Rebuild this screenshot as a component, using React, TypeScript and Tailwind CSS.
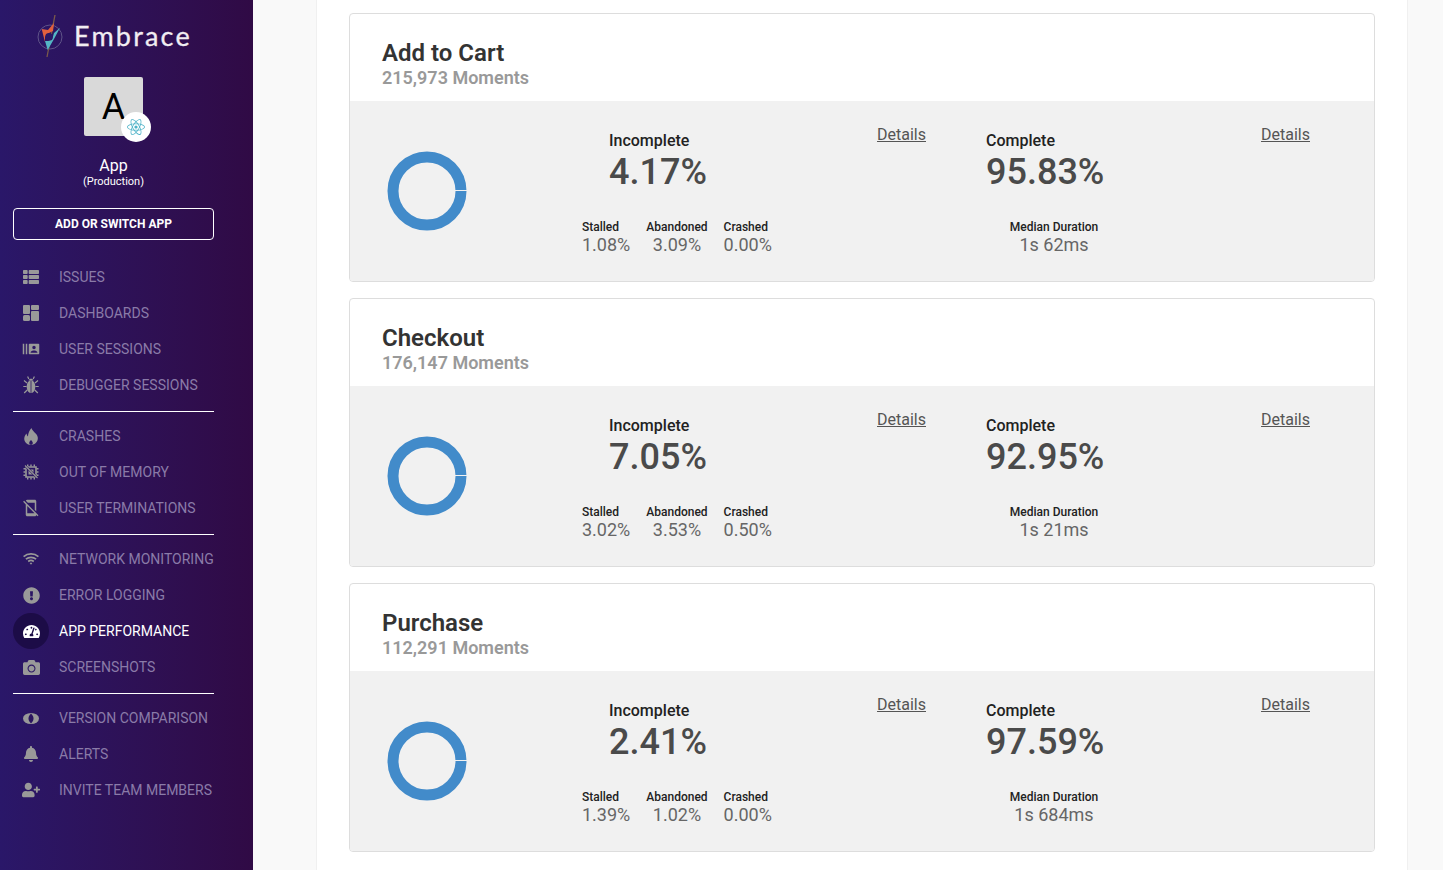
import React from 'react';
import { FaThList, FaExclamationCircle, FaTachometerAlt, FaCamera, FaBell, FaUserPlus, FaReact } from 'react-icons/fa';
import { MdRecentActors, MdMobileOff } from 'react-icons/md';

const DashboardIcon = () => (
  <svg viewBox="0 0 16 16" className="w-4 h-4" fill="currentColor">
    <rect x="0" y="0" width="7" height="9" rx="1" />
    <rect x="0" y="10" width="7" height="6" rx="1.5" />
    <rect x="8" y="0" width="8" height="5" rx="1" />
    <rect x="8" y="6" width="8" height="10" rx="1" />
  </svg>
);

const BugIcon = () => (
  <svg viewBox="0 0 16 18" className="w-4 h-[18px]" fill="currentColor">
    <path d="M8 4.5c-2.600 0-4.300 2.600-4.300 6.200 0 3.600 1.800 6.300 4.300 6.300s4.300-2.700 4.300-6.300c0-3.600-1.700-6.200-4.300-6.200z" />
    <path d="M5.600 4.600C5.900 3.400 6.800 2.800 8 2.800s2.100.6 2.400 1.800z" />
    <path d="M8 5v12" stroke="#2b1560" strokeWidth="0.8" />
    <path d="M5.800 3 4.600.5M10.200 3l1.200-2.500M4 7 1 4.500M12 7l3-2.500M3.600 10.500H.3M12.400 10.500h3.300M4.200 14 1.200 17M11.800 14l3 3" stroke="currentColor" strokeWidth="1.2" fill="none" />
  </svg>
);

const FlameIcon = () => (
  <svg viewBox="0 0 14 17" className="w-[14px] h-[17px]" fill="currentColor">
    <path
      fillRule="evenodd"
      d="M7.500 0c.3 3 5.300 5 6.200 9 .8 3.800-2 8-6.700 8S-.4 13 .4 9.500C.8 7.800 1.600 6.500 2.600 5.500c.1 1.300.5 2.300 1.300 2.900C4.200 5 5.500 2 7.500 0zM7 12c-1 1-1.800 1.900-1.800 3 0 1 .8 1.800 1.800 1.800s1.800-.8 1.800-1.800c0-1.100-.8-2-1.800-3z"
    />
  </svg>
);

const MemoryOff = () => (
  <svg viewBox="0 0 16 16" className="w-4 h-4" fill="currentColor">
    <path d="M3 3h10v10H3z" fill="none" stroke="currentColor" strokeWidth="1.6" />
    <path d="M5.500 5.500h5v5h-5z" />
    <path d="M4 0.500h1.400v2H4zM7.300 0.500h1.400v2H7.300zM10.600 0.500H12v2h-1.400zM4 13.500h1.400v2H4zM7.300 13.500h1.400v2H7.300zM10.600 13.500H12v2h-1.400zM0.500 4h2v1.400h-2zM0.500 7.300h2v1.400h-2zM0.500 10.600h2V12h-2zM13.500 4h2v1.400h-2zM13.500 7.300h2v1.400h-2zM13.500 10.600h2V12h-2z" />
    <path d="M2 1.500 14.500 14" stroke="#2b1560" strokeWidth="2.2" />
    <path d="M2 1.500 14.500 14" stroke="currentColor" strokeWidth="1.1" />
  </svg>
);

const WifiIcon = () => (
  <svg viewBox="0 0 16 12" className="w-4 h-3" fill="none" stroke="currentColor" strokeWidth="1.7">
    <path d="M0.600 3.600C4.800 0 11.200 0 15.400 3.600" />
    <path d="M2.900 6.100C5.800 3.700 10.200 3.700 13.100 6.100" />
    <path d="M5.200 8.500C6.800 7.200 9.200 7.200 10.800 8.500" />
    <path d="M6.700 10 8 11.800 9.300 10C8.500 9.500 7.500 9.500 6.700 10z" fill="currentColor" stroke="none" />
  </svg>
);

const VersionEye = () => (
  <svg viewBox="0 0 16 11" className="w-4 h-[11px]">
    <ellipse cx="8" cy="5.500" rx="8" ry="5.500" fill="currentColor" />
    <path d="M8 .5C6 2.500 5.500 4 5.500 5.500S6 8.500 8 10.500c2-2 2.500-3.500 2.500-5S10 2.500 8 .5z" fill="#2b1560" />
  </svg>
);

const Logo = () => (
  <svg viewBox="0 0 30 44" className="w-[30px] h-[44px]">
    <circle cx="15" cy="22" r="12" fill="none" stroke="#5f5488" strokeWidth="1" />
    <path d="M20 0 12 42" stroke="#7a5a4a" strokeWidth="1.3" />
    <path d="M6.700 14 13 15 19 8 18 16 14 18 10 22 10 27z" fill="#e2603f" />
    <path d="M25 12.700 19 24 12.700 35 10 26 13 26 17 25 19 18z" fill="#54b5c4" />
    <circle cx="14" cy="21.700" r="3.800" fill="#2a1766" />
  </svg>
);

const navGroups = [
  [
    { label: 'Issues', icon: <FaThList size={16} /> },
    { label: 'Dashboards', icon: <DashboardIcon /> },
    { label: 'User Sessions', icon: <span className="-scale-x-100"><MdRecentActors size={18} /></span> },
    { label: 'Debugger Sessions', icon: <BugIcon /> },
  ],
  [
    { label: 'Crashes', icon: <FlameIcon /> },
    { label: 'Out of Memory', icon: <MemoryOff /> },
    { label: 'User Terminations', icon: <MdMobileOff size={18} /> },
  ],
  [
    { label: 'Network Monitoring', icon: <WifiIcon /> },
    { label: 'Error Logging', icon: <FaExclamationCircle size={17} /> },
    { label: 'App Performance', icon: <FaTachometerAlt size={17} />, active: true },
    { label: 'Screenshots', icon: <FaCamera size={17} /> },
  ],
  [
    { label: 'Version Comparison', icon: <VersionEye /> },
    { label: 'Alerts', icon: <FaBell size={16} /> },
    { label: 'Invite Team Members', icon: <FaUserPlus size={18} /> },
  ],
];

const moments = [
  { name: 'Add to Cart', count: '215,973', incomplete: '4.17%', complete: '95.83%', stalled: '1.08%', abandoned: '3.09%', crashed: '0.00%', median: '1s 62ms' },
  { name: 'Checkout', count: '176,147', incomplete: '7.05%', complete: '92.95%', stalled: '3.02%', abandoned: '3.53%', crashed: '0.50%', median: '1s 21ms' },
  { name: 'Purchase', count: '112,291', incomplete: '2.41%', complete: '97.59%', stalled: '1.39%', abandoned: '1.02%', crashed: '0.00%', median: '1s 684ms' },
];

const Donut = () => (
  <svg viewBox="0 0 80 80" className="w-20 h-20">
    <circle cx="40" cy="40" r="34" fill="none" stroke="#428bca" strokeWidth="11" />
    <path d="M68 39.500h12" stroke="#f1f1f1" strokeWidth="1" />
  </svg>
);

const Sidebar = () => (
  <aside className="w-[253px] shrink-0 h-full bg-gradient-to-r from-[#2a1769] to-[#300a45] text-white pl-[13px] pr-[39px]">
    <div className="flex items-center h-[74px] pl-[22px] gap-[9px]">
      <Logo />
      <span className="font-['Lato'] text-[27px] leading-none tracking-[2.2px] text-[#f1edf2] pb-[3px] [-webkit-text-stroke:0.3px_#f1edf2]">Embrace</span>
    </div>
    <div className="flex flex-col items-center">
      <div className="relative mt-[3px] w-[59px] h-[59px] rounded-[2px] bg-[#d9d9d9] flex items-center justify-center">
        <span className="text-[36px] leading-none text-black">A</span>
        <div className="absolute -right-2 -bottom-[6px] w-[30px] h-[30px] rounded-full bg-white flex items-center justify-center text-[#4fb3c8]">
          <FaReact size={18} />
        </div>
      </div>
      <div className="mt-[20px] text-base leading-[19px]">App</div>
      <div className="text-[11px] leading-[13px]">(Production)</div>
    </div>
    <button className="mt-5 w-[201px] h-8 border border-white rounded text-xs font-bold uppercase">Add or Switch App</button>
    <nav className="mt-[19px]">
      {navGroups.map((group, i) => (
        <div key={i} className={i < navGroups.length - 1 ? 'border-b border-white pb-2 mb-[6px]' : ''}>
          {group.map(item => (
            <div key={item.label} className="flex items-center h-9 uppercase text-sm whitespace-nowrap">
              <div className={`w-9 h-9 shrink-0 rounded-full flex items-center justify-center ${item.active ? 'bg-[#1c0c47] text-white' : 'text-[#999999]'}`}>
                {item.icon}
              </div>
              <span className={`ml-[10px] ${item.active ? 'text-white' : 'text-[#8a7ba8]'}`}>{item.label}</span>
            </div>
          ))}
        </div>
      ))}
    </nav>
  </aside>
);

const Metric = ({ label, value, align }: { label: string; value: string; align: string }) => (
  <div className={align}>
    <div className="text-xs font-medium leading-[14px] text-[#222222]">{label}</div>
    <div className="text-lg leading-[21px] text-[#666666]">{value}</div>
  </div>
);

const MomentCard = ({ m }: { m: (typeof moments)[number] }) => (
  <div className="h-[269px] rounded border border-[#dddddd] overflow-hidden bg-white">
    <div className="h-[87px] pl-8 pt-[24px]">
      <h2 className="text-2xl font-semibold leading-[30px] text-[#333333]">{m.name}</h2>
      <p className="text-lg font-semibold leading-[20px] text-[#999999]">{m.count} Moments</p>
    </div>
    <div className="h-[180px] bg-[#f1f1f1] flex">
      <div className="w-[232px] shrink-0 pl-[37px] flex items-center">
        <Donut />
      </div>
      <div className="w-[404px] shrink-0 pr-[60px] pt-6">
        <div className="flex justify-between">
          <div className="pl-[27px] pt-[6px]">
            <div className="text-base font-medium leading-[19px] text-[#222222]">Incomplete</div>
            <div className="text-4xl font-medium leading-[44px] text-[#4a4a4a]">{m.incomplete}</div>
          </div>
          <a className="text-base leading-[19px] underline text-[#555555]">Details</a>
        </div>
        <div className="flex gap-4 mt-[26px]">
          <Metric label="Stalled" value={m.stalled} align="text-left" />
          <Metric label="Abandoned" value={m.abandoned} align="text-center" />
          <Metric label="Crashed" value={m.crashed} align="text-left" />
        </div>
      </div>
      <div className="w-[324px] shrink-0 pt-6">
        <div className="flex justify-between">
          <div className="pt-[6px]">
            <div className="text-base font-medium leading-[19px] text-[#222222]">Complete</div>
            <div className="text-4xl font-medium leading-[44px] text-[#4a4a4a]">{m.complete}</div>
          </div>
          <a className="text-base leading-[19px] underline text-[#555555]">Details</a>
        </div>
        <div className="mt-[26px] w-[136px]">
          <Metric label="Median Duration" value={m.median} align="text-center" />
        </div>
      </div>
    </div>
  </div>
);

export default function App() {
  return (
    <div className="flex h-screen overflow-hidden bg-[#f9f9f9] font-['Roboto',sans-serif]">
      <Sidebar />
      <main className="ml-[63px] w-[1092px] shrink-0 h-full bg-white border-x border-[#f0f0f0] pl-8 pr-8 pt-[13px] flex flex-col gap-4">
        {moments.map(m => (
          <MomentCard key={m.name} m={m} />
        ))}
      </main>
    </div>
  );
}
